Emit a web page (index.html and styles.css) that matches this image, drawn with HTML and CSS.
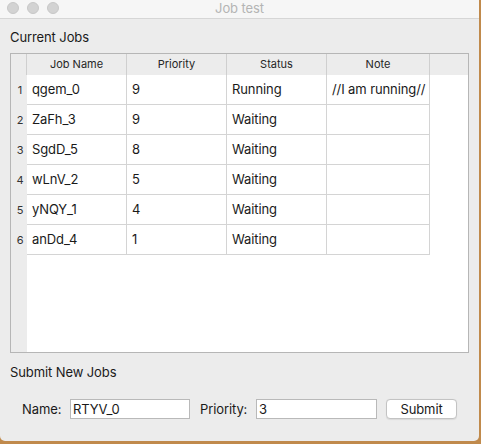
FILE: index.html
```html
<!DOCTYPE html>
<html>
<head>
<meta charset="utf-8">
<title>Job test</title>
<link rel="stylesheet" href="styles.css">
</head>
<body>
<div class="window">
  <div class="titlebar">
    <div class="lights"><span class="light"></span><span class="light"></span><span class="light"></span></div>
    <div class="title">Job test</div>
    <div></div>
  </div>
  <div class="content">
    <div class="label">Current Jobs</div>
    <div class="frame">
      <div class="hrow">
        <div class="corner"></div>
        <div class="hcell">Job Name</div>
        <div class="hcell">Priority</div>
        <div class="hcell">Status</div>
        <div class="hcell note">Note</div>
        <div class="hfill"></div>
      </div>
      <div class="body">
        <div class="rowheads">
          <div class="rh">1</div><div class="rh">2</div><div class="rh">3</div>
          <div class="rh">4</div><div class="rh">5</div><div class="rh">6</div>
        </div>
        <div class="cells">
          <div class="row"><div class="cell">qgem_0</div><div class="cell">9</div><div class="cell">Running</div><div class="cell note">//I am running//</div></div>
          <div class="row"><div class="cell">ZaFh_3</div><div class="cell">9</div><div class="cell">Waiting</div><div class="cell note"></div></div>
          <div class="row"><div class="cell">SgdD_5</div><div class="cell">8</div><div class="cell">Waiting</div><div class="cell note"></div></div>
          <div class="row"><div class="cell">wLnV_2</div><div class="cell">5</div><div class="cell">Waiting</div><div class="cell note"></div></div>
          <div class="row"><div class="cell">yNQY_1</div><div class="cell">4</div><div class="cell">Waiting</div><div class="cell note"></div></div>
          <div class="row"><div class="cell">anDd_4</div><div class="cell">1</div><div class="cell">Waiting</div><div class="cell note"></div></div>
        </div>
      </div>
    </div>
    <div class="label label2">Submit New Jobs</div>
    <div class="form">
      <span class="flabel name-label">Name:</span>
      <div class="input name-input">RTYV_0</div>
      <span class="flabel prio-label">Priority:</span>
      <div class="input prio-input">3</div>
      <div class="button">Submit</div>
    </div>
  </div>
</div>
</body>
</html>
```
FILE: styles.css
```css
html, body {
  margin: 0;
  padding: 0;
}
body {
  width: 481px;
  height: 444px;
  background: #c08a4c;
  overflow: hidden;
  font-family: "Inter", "Liberation Sans", sans-serif;
  font-size: 13px;
  letter-spacing: -0.1px;
  color: #1a1a1a;
}
.window {
  width: 479px;
  height: 441px;
  background: #ececec;
  border-radius: 0 0 5px 5px;
  overflow: hidden;
  display: flex;
  flex-direction: column;
}
.titlebar {
  height: 19px;
  box-sizing: border-box;
  background: #f6f6f6;
  border-bottom: 1px solid #d6d6d6;
  display: grid;
  grid-template-columns: 1fr auto 1fr;
  align-items: start;
}
.lights {
  display: flex;
  gap: 8px;
  padding-left: 7px;
  padding-top: 2px;
}
.light {
  width: 12px;
  height: 12px;
  box-sizing: border-box;
  border-radius: 50%;
  background: #d3d3d3;
  border: 1px solid #c8c8c8;
}
.title {
  color: #b4b4b4;
  font-size: 13px;
  line-height: 16px;
}
.content {
  padding: 0 10px;
  display: flex;
  flex-direction: column;
}
.label {
  margin-top: 10px;
  line-height: 16px;
  height: 16px;
}
.label2 {
  margin-top: 11px;
}
.frame {
  margin-top: 8px;
  width: 459px;
  height: 300px;
  box-sizing: border-box;
  border: 1px solid #b6b6b6;
  background: #fff;
  display: flex;
  flex-direction: column;
}
.hrow {
  display: flex;
  height: 21px;
  flex: none;
  background: #ececec;
  font-size: 11px;
  letter-spacing: 0;
  color: #262626;
}
.corner {
  width: 16px;
  box-sizing: border-box;
  border-right: 1px solid #cfcfcf;
}
.hcell {
  width: 100px;
  box-sizing: border-box;
  border-right: 1px solid #cfcfcf;
  text-align: center;
  line-height: 21px;
}
.hcell.note {
  width: 103px;
}
.hfill {
  flex: 1;
}
.body {
  flex: 1;
  display: flex;
}
.rowheads {
  width: 16px;
  background: #ececec;
  font-size: 11px;
  color: #333;
}
.rh {
  height: 30px;
  line-height: 30px;
  text-align: center;
  padding-left: 2px;
  box-sizing: border-box;
}
.cells {
  display: flex;
  flex-direction: column;
}
.row {
  display: flex;
  height: 30px;
}
.cell {
  width: 100px;
  box-sizing: border-box;
  border-right: 1px solid #d4d4d4;
  border-bottom: 1px solid #d4d4d4;
  padding-left: 5px;
  line-height: 29px;
  white-space: nowrap;
}
.cell.note {
  width: 103px;
}
.form {
  margin-top: 19px;
  display: flex;
  align-items: center;
  height: 20px;
}
.flabel {
  line-height: 20px;
}
.name-label {
  padding-left: 12px;
  width: 48px;
}
.prio-label {
  width: 56px;
  margin-left: 10px;
}
.input {
  height: 20px;
  box-sizing: border-box;
  border: 1px solid #b9b9b9;
  background: #fff;
  line-height: 18px;
  padding-left: 2px;
}
.name-input {
  width: 120px;
}
.prio-input {
  width: 121px;
}
.button {
  margin-left: 9px;
  width: 71px;
  height: 20px;
  box-sizing: border-box;
  border: 1px solid #c3c3c3;
  border-radius: 4px;
  background: #fff;
  text-align: center;
  line-height: 18px;
  box-shadow: 0 0.5px 1px rgba(0,0,0,0.08);
}
```
